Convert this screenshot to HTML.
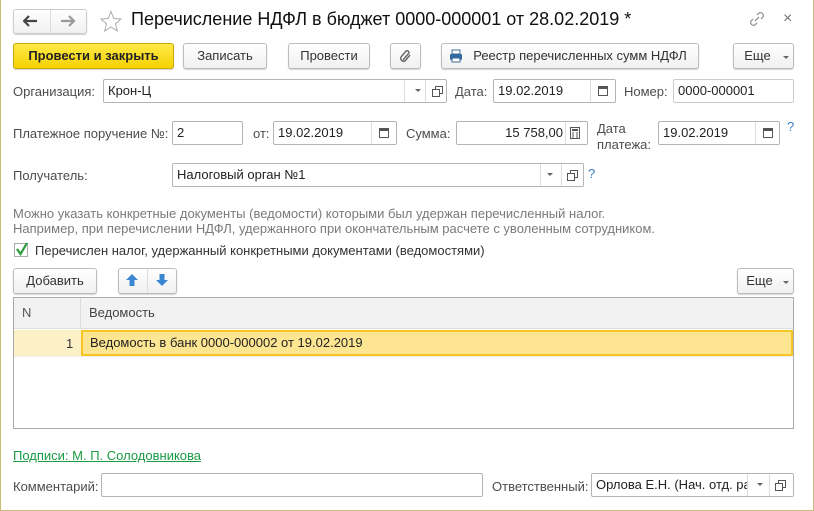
<!DOCTYPE html>
<html><head><meta charset="utf-8"><style>
*{box-sizing:border-box;margin:0;padding:0}
body{width:814px;height:511px;overflow:hidden;background:#fff;font-family:"Liberation Sans",sans-serif;font-size:13px;color:#333;position:relative}
.frame{position:absolute;left:0;top:0;width:814px;height:511px;border:1px solid #c9bc78;border-top:none}
.a{position:absolute;white-space:nowrap}
.btn{position:absolute;height:26px;border:1px solid #bcbcbc;border-radius:3px;background:linear-gradient(#fff,#f0f0f0);box-shadow:0 1px 1px rgba(0,0,0,.18);text-align:center;line-height:24px;color:#333}
.inp{position:absolute;height:24px;border:1px solid #b5b5b5;border-radius:2px;background:#fff;line-height:22px;padding-left:4px;color:#222}
.sep{position:absolute;top:0;bottom:0;border-left:1px solid #ddd}
.lbl{position:absolute;color:#4d4d4d;white-space:nowrap}
.dd{position:absolute;top:9px;width:0;height:0;border-left:3px solid transparent;border-right:3px solid transparent;border-top:3px solid #666}
.cal{position:absolute;top:6px;width:10px;height:10px;border:1px solid #555;border-top:3px solid #555}
.cp{position:absolute;top:6px;width:8px;height:8px;border:1px solid #555}
.cp2{position:absolute;top:9px;width:8px;height:8px;border:1px solid #555;background:#fff}
</style></head><body>
<div class="frame"></div>

<div class="btn" style="left:13px;top:9px;width:74px;height:25px;border-color:#ccc"></div>
<div class="a" style="left:50px;top:10px;height:23px;border-left:1px solid #ddd"></div>
<svg class="a" style="left:23px;top:15px" width="16" height="12"><path d="M1 6H14M6 1L1 6L6 11" stroke="#444" stroke-width="2.2" fill="none"/></svg>
<svg class="a" style="left:60px;top:15px" width="16" height="12"><path d="M1 6H14M9 1L14 6L9 11" stroke="#999" stroke-width="2.2" fill="none"/></svg>
<svg class="a" style="left:99px;top:10px" width="24" height="23"><path d="M12 1.5L14.8 8.5L22 9L16.5 13.8L18.3 21L12 17L5.7 21L7.5 13.8L2 9L9.2 8.5Z" fill="none" stroke="#aaa" stroke-width="1"/></svg>
<div class="a" style="left:131px;top:9px;font-size:18px;color:#111">Перечисление НДФЛ в бюджет 0000-000001 от 28.02.2019 *</div>
<svg class="a" style="left:749px;top:11px" width="16" height="16"><path d="M6 10L10 6M4 8L2.5 9.5A2.5 2.5 0 0 0 6.5 13.5L8 12M8 4L9.5 2.5A2.5 2.5 0 0 1 13.5 6.5L12 8" stroke="#888" stroke-width="1.2" fill="none"/></svg>
<div class="a" style="left:783px;top:10px;font-size:16px;color:#777">×</div>

<div class="btn" style="left:13px;top:43px;width:161px;background:linear-gradient(#ffe94a,#f5d200);border-color:#c9a800;color:#222;font-weight:bold;font-size:13px">Провести и закрыть</div>
<div class="btn" style="left:183px;top:43px;width:84px">Записать</div>
<div class="btn" style="left:288px;top:43px;width:82px">Провести</div>
<div class="btn" style="left:390px;top:43px;width:31px"><svg style="margin-top:5px" width="14" height="14"><path d="M4 11L10 4A2 2 0 0 0 7 2L2 8A3 3 0 0 0 6 12L11 6" stroke="#666" stroke-width="1.4" fill="none"/></svg></div>
<div class="btn" style="left:441px;top:43px;width:258px;padding-left:20px">Реестр перечисленных сумм НДФЛ</div>
<svg class="a" style="left:449px;top:49px" width="14" height="14"><rect x="3" y="1" width="8" height="4" fill="#fff" stroke="#3a6a9a"/><rect x="1" y="5" width="12" height="6" rx="1" fill="#2f6aa3"/><rect x="3" y="9" width="8" height="4" fill="#fff" stroke="#3a6a9a"/></svg>
<div class="btn" style="left:733px;top:43px;width:61px;padding-right:12px">Еще</div>
<div class="dd" style="left:783px;top:56px"></div>

<div class="lbl" style="left:13px;top:84px">Организация:</div>
<div class="inp" style="left:103px;top:79px;width:344px">Крон-Ц<div class="sep" style="left:300px"></div><div class="dd" style="left:311px"></div><div class="sep" style="left:321px"></div><div class="cp" style="left:331px"></div><div class="cp2" style="left:328px"></div></div>
<div class="lbl" style="left:455px;top:84px">Дата:</div>
<div class="inp" style="left:493px;top:79px;width:123px">19.02.2019<div class="sep" style="left:96px"></div><div class="cal" style="left:104px"></div></div>
<div class="lbl" style="left:624px;top:84px">Номер:</div>
<div class="inp" style="left:673px;top:79px;width:121px;border-color:#ccc">0000-000001</div>

<div class="lbl" style="left:13px;top:126px">Платежное поручение №:</div>
<div class="inp" style="left:172px;top:121px;width:71px">2</div>
<div class="lbl" style="left:253px;top:126px">от:</div>
<div class="inp" style="left:273px;top:121px;width:124px">19.02.2019<div class="sep" style="left:97px"></div><div class="cal" style="left:105px"></div></div>
<div class="lbl" style="left:406px;top:126px">Сумма:</div>
<div class="inp" style="left:456px;top:121px;width:132px;text-align:right;padding-right:24px">15 758,00<div class="sep" style="left:108px"></div><svg style="position:absolute;left:113px;top:5px" width="10" height="12"><rect x="0.5" y="0.5" width="9" height="11" fill="none" stroke="#555"/><rect x="2" y="2" width="6" height="2" fill="#555"/><path d="M2 6h2M6 6h2M2 8h2M6 8h2M2 10h2M6 10h2" stroke="#555"/></svg></div>
<div class="lbl" style="left:597px;top:121px;line-height:16px">Дата<br>платежа:</div>
<div class="inp" style="left:658px;top:121px;width:122px">19.02.2019<div class="sep" style="left:96px"></div><div class="cal" style="left:104px"></div></div>
<div class="a" style="left:787px;top:119px;color:#3a7cc0;font-size:13px">?</div>

<div class="lbl" style="left:13px;top:168px">Получатель:</div>
<div class="inp" style="left:172px;top:163px;width:412px">Налоговый орган №1<div class="sep" style="left:367px"></div><div class="dd" style="left:374px"></div><div class="sep" style="left:388px"></div><div class="cp" style="left:397px"></div><div class="cp2" style="left:394px"></div></div>
<div class="a" style="left:588px;top:166px;color:#3a7cc0">?</div>

<div class="a" style="left:13px;top:206px;color:#7a7a7a;font-size:13px;line-height:15px">Можно указать конкретные документы (ведомости) которыми был удержан перечисленный налог.<br>Например, при перечислении НДФЛ, удержанного при окончательным расчете с уволенным сотрудником.</div>
<div class="a" style="left:14px;top:243px;width:14px;height:14px;border:1px solid #aaa;background:#fff"></div>
<svg class="a" style="left:14px;top:241px" width="16" height="16"><path d="M3 8L6.5 13L13 2" stroke="#2a9a3a" stroke-width="2.2" fill="none"/></svg>
<div class="a" style="left:35px;top:243px;color:#333">Перечислен налог, удержанный конкретными документами (ведомостями)</div>

<div class="btn" style="left:13px;top:268px;width:84px">Добавить</div>
<div class="btn" style="left:118px;top:268px;width:59px"></div>
<div class="a" style="left:147px;top:269px;height:24px;border-left:1px solid #ddd"></div>
<svg class="a" style="left:125px;top:273px" width="14" height="14"><path d="M7 1L13 7H9.5V13H4.5V7H1Z" fill="#3b86d0"/></svg>
<svg class="a" style="left:155px;top:273px" width="14" height="14"><path d="M7 13L13 7H9.5V1H4.5V7H1Z" fill="#3b86d0"/></svg>
<div class="btn" style="left:737px;top:268px;width:57px;padding-right:12px">Еще</div>
<div class="dd" style="left:783px;top:281px"></div>

<div class="a" style="left:13px;top:297px;width:781px;height:132px;border:1px solid #aaa;background:#fff"></div>
<div class="a" style="left:14px;top:298px;width:779px;height:31px;background:#f2f2f2;border-bottom:1px solid #ddd"></div>
<div class="a" style="left:80px;top:298px;height:31px;border-left:1px solid #ddd"></div>
<div class="a" style="left:22px;top:305px;color:#555">N</div>
<div class="a" style="left:89px;top:305px;color:#444">Ведомость</div>
<div class="a" style="left:14px;top:330px;width:67px;height:26px;background:#fcf1c6"></div>
<div class="a" style="left:66px;top:336px;color:#333">1</div>
<div class="a" style="left:81px;top:330px;width:712px;height:26px;background:#fde592;border:2px solid #f6c622;padding-left:7px;line-height:22px;color:#222">Ведомость в банк 0000-000002 от 19.02.2019</div>
<div class="a" style="left:14px;top:356px;width:779px;border-top:1px solid #eee"></div>

<div class="a" style="left:13px;top:448px;color:#1a9a44;text-decoration:underline">Подписи: М. П. Солодовникова</div>

<div class="lbl" style="left:13px;top:479px">Комментарий:</div>
<div class="inp" style="left:101px;top:473px;width:382px"></div>
<div class="lbl" style="left:492px;top:479px">Ответственный:</div>
<div class="inp" style="left:591px;top:473px;width:203px;overflow:hidden">Орлова Е.Н. (Нач. отд. ра<div class="sep" style="left:155px;background:#fff;width:48px;border-left:1px solid #ddd"></div><div class="dd" style="left:165px"></div><div class="sep" style="left:177px"></div><div class="cp" style="left:186px"></div><div class="cp2" style="left:183px"></div></div>
</body></html>
